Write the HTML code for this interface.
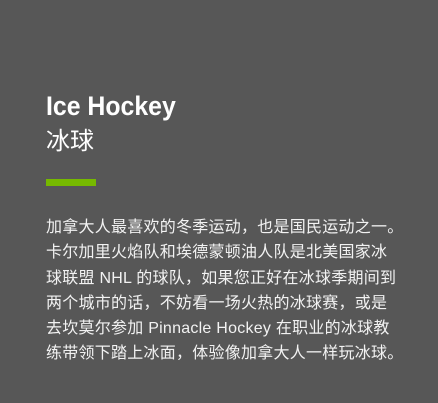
<!DOCTYPE html>
<html><head><meta charset="utf-8"><style>
html,body{margin:0;padding:0;}
body{width:438px;height:403px;background:#575757;position:relative;overflow:hidden;font-family:"Liberation Sans","Noto Sans CJK SC",sans-serif;color:#fff;}
.t{position:absolute;left:46px;top:89px;font-family:"Liberation Sans",sans-serif;font-weight:bold;font-size:27px;line-height:34px;white-space:nowrap;transform:scaleX(0.92);transform-origin:left top;}
.c{position:absolute;left:46px;top:127px;font-size:24px;line-height:30px;}
.bar{position:absolute;left:46px;top:179px;width:50px;height:7px;background:#76b900;}
.p{position:absolute;left:46px;top:215px;width:380px;font-size:16px;line-height:25.3px;color:#f2f2f2;letter-spacing:0.25px;white-space:nowrap;}
</style></head><body>
<div class="t">Ice Hockey</div>
<div class="c">冰球</div>
<div class="bar"></div>
<div class="p">加拿大人最喜欢的冬季运动，也是国民运动之一。<br>卡尔加里火焰队和埃德蒙顿油人队是北美国家冰<br>球联盟 NHL 的球队，如果您正好在冰球季期间到<br>两个城市的话，不妨看一场火热的冰球赛，或是<br>去坎莫尔参加 Pinnacle Hockey 在职业的冰球教<br>练带领下踏上冰面，体验像加拿大人一样玩冰球。</div>
</body></html>
